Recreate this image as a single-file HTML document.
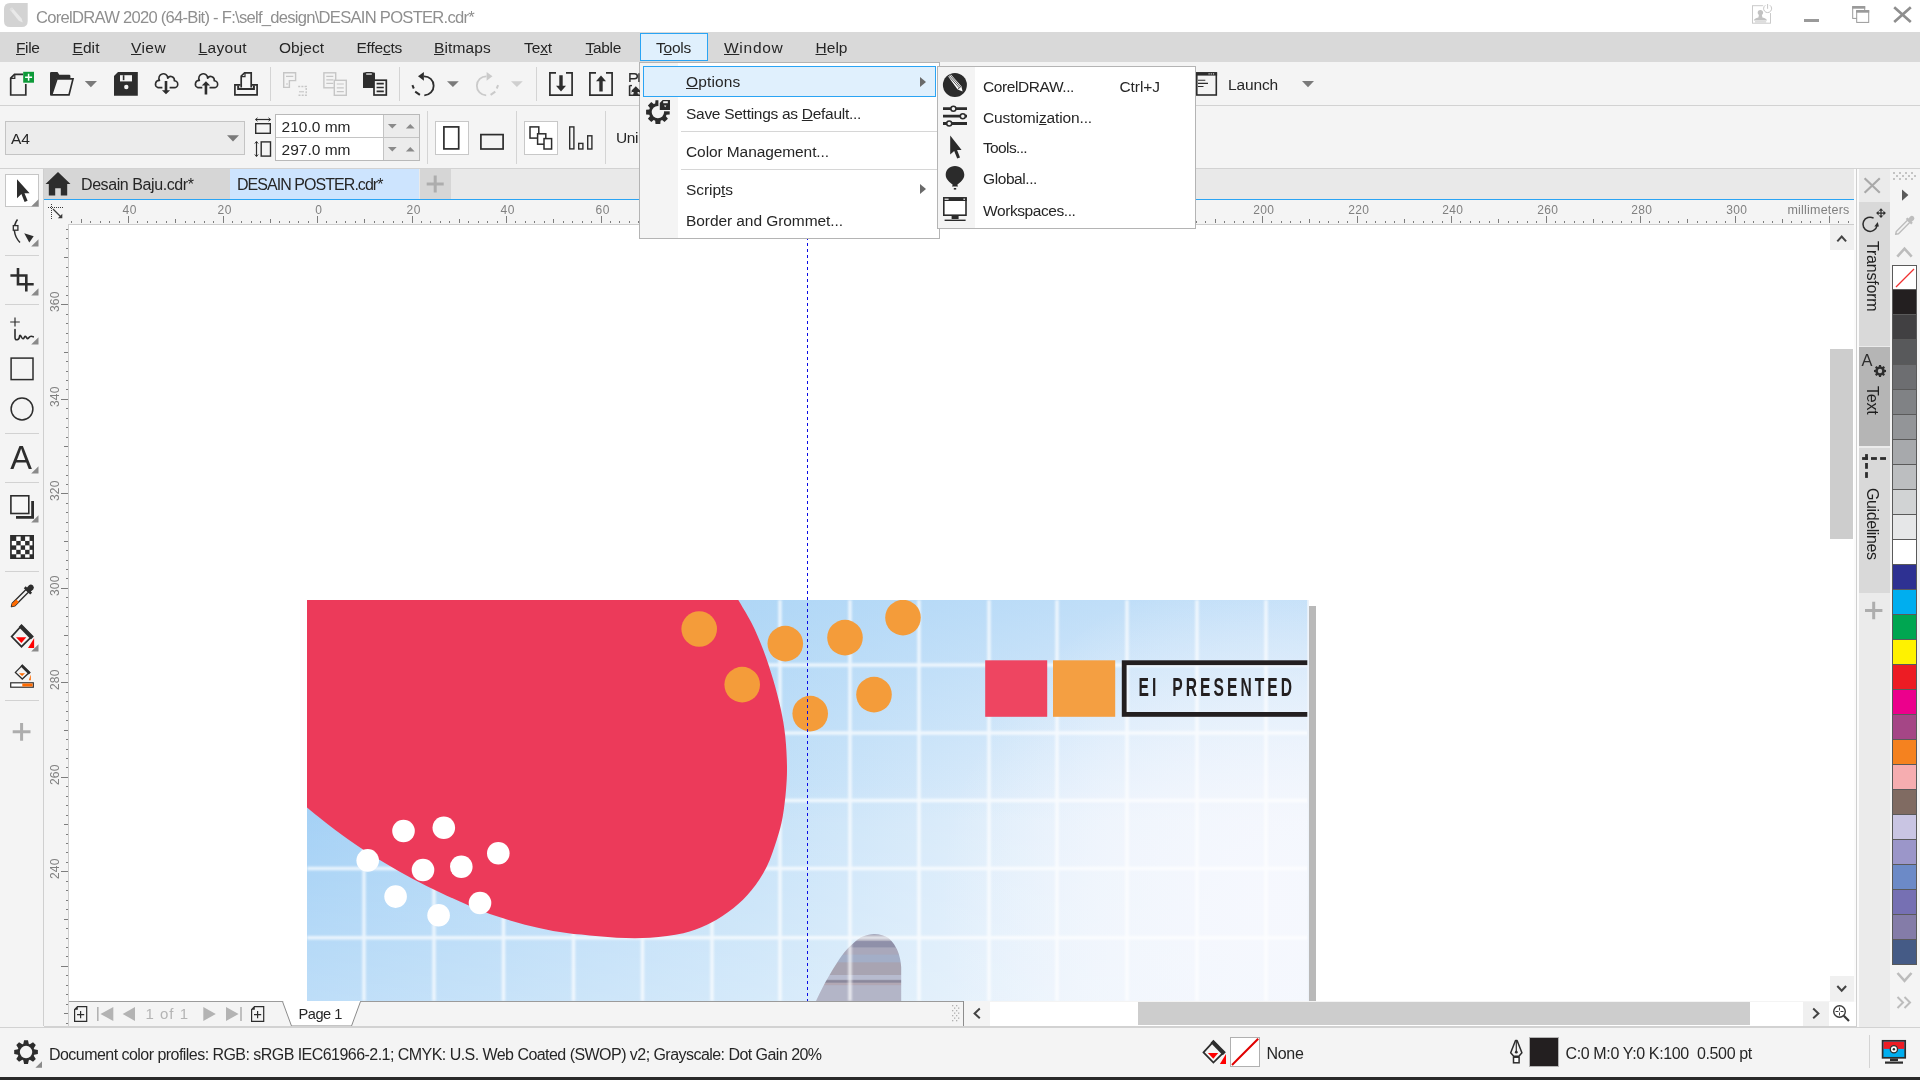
<!DOCTYPE html>
<html lang="en"><head><meta charset="utf-8"><title>CorelDRAW 2020 (64-Bit) - DESAIN POSTER.cdr</title>
<style>
html,body{margin:0;padding:0;background:#fff;}
body{width:1920px;height:1080px;overflow:hidden;font-family:"Liberation Sans",sans-serif;}
#app{position:relative;width:1920px;height:1080px;overflow:hidden;background:#f4f4f4;}
#app div,#app svg,#app span.t{position:absolute;}
.t{white-space:nowrap;line-height:20px;height:20px;}
.t u{text-decoration:underline;text-decoration-thickness:1px;text-underline-offset:0.8px;}
#titlebar{left:0;top:0;width:1920px;height:32px;background:#fff;}
#menubar{left:0;top:32px;width:1920px;height:30px;background:#d9d9d9;}
#toolbar{left:0;top:62px;width:1920px;height:43px;background:#f4f4f4;border-bottom:1px solid #d2d2d2;}
#propbar{left:0;top:106px;width:1920px;height:62px;background:#f4f4f4;border-bottom:1px solid #d2d2d2;}
#tabbar{left:44px;top:169px;width:1810px;height:30px;background:#e9e9e9;border-bottom:1px solid #2aa4f4;}
#toolbox{left:0;top:169px;width:43px;height:857px;background:#f4f4f4;border-right:1px solid #cfcfcf;}
#rulertop{left:44px;top:200px;width:1810px;height:25px;background:#f4f4f4;}
#rulertop-line{left:68px;top:224px;width:1786px;height:1px;background:#cdcdcd;}
#rulerleft{left:44px;top:225px;width:24px;height:801px;background:#f4f4f4;border-right:1px solid #cdcdcd;}
#canvas{left:69px;top:225px;width:1760px;height:776px;background:#fff;overflow:hidden;}
#vscroll{left:1829px;top:225px;width:25px;height:776px;background:#fff;}
#pagenav{left:69px;top:1001px;width:1785px;height:25px;background:#f4f4f4;}
#statusbar{left:0;top:1027px;width:1920px;height:50px;background:#f4f4f4;border-top:1px solid #d2d2d2;}
#taskstrip{left:0;top:1077px;width:1920px;height:3px;background:#2a2a2a;}
#dockers{left:1854px;top:169px;width:36px;height:858px;background:#f4f4f4;}
#palette{left:1890px;top:169px;width:30px;height:858px;background:#f4f4f4;}
.sep-v{width:1px;background:#d2d2d2;}
.sep-h{height:1px;background:#d2d2d2;}
.sw{left:1892px;width:25px;height:25px;box-sizing:border-box;border:1px solid #5a5a5a;border-top:none;}
.menu{background:#fff;border:1px solid #b4b4b4;box-sizing:border-box;}

#labels{left:0;top:0;width:1920px;height:1080px;will-change:transform;}
#art{will-change:transform;}

</style></head>
<body>
<div id="app">
<div id="titlebar"></div>
<div id="menubar"></div>
<div id="toolbar"></div>
<div id="propbar"></div>
<div id="tabbar"></div>
<div id="toolbox"></div>
<div id="rulertop"></div>
<div id="rulertop-line"></div>
<div id="rulerleft"></div>
<div id="canvas"></div>
<div id="vscroll"></div>
<div id="pagenav"></div>
<div id="dockers"></div>
<div id="palette"></div>
<div id="statusbar"></div>
<div id="taskstrip"></div>

<svg id="rt-ticks" style="left:44px;top:200px" width="1809" height="23" viewBox="0 0 1809 23"><path d="M27.50,21v2M37.50,19v4M46.50,21v2M56.50,21v2M65.50,21v2M75.50,21v2M84.50,16v7M93.50,21v2M103.50,21v2M112.50,21v2M122.50,21v2M131.50,19v4M141.50,21v2M150.50,21v2M160.50,21v2M169.50,21v2M179.50,16v7M188.50,21v2M197.50,21v2M207.50,21v2M216.50,21v2M226.50,19v4M235.50,21v2M245.50,21v2M254.50,21v2M264.50,21v2M273.50,16v7M282.50,21v2M292.50,21v2M301.50,21v2M311.50,21v2M320.50,19v4M330.50,21v2M339.50,21v2M349.50,21v2M358.50,21v2M368.50,16v7M377.50,21v2M386.50,21v2M396.50,21v2M405.50,21v2M415.50,19v4M424.50,21v2M434.50,21v2M443.50,21v2M453.50,21v2M462.50,16v7M471.50,21v2M481.50,21v2M490.50,21v2M500.50,21v2M509.50,19v4M519.50,21v2M528.50,21v2M538.50,21v2M547.50,21v2M557.50,16v7M566.50,21v2M575.50,21v2M585.50,21v2M594.50,21v2M604.50,19v4M613.50,21v2M623.50,21v2M632.50,21v2M642.50,21v2M651.50,16v7M660.50,21v2M670.50,21v2M679.50,21v2M689.50,21v2M698.50,19v4M708.50,21v2M717.50,21v2M727.50,21v2M736.50,21v2M746.50,16v7M755.50,21v2M764.50,21v2M774.50,21v2M783.50,21v2M793.50,19v4M802.50,21v2M812.50,21v2M821.50,21v2M831.50,21v2M840.50,16v7M849.50,21v2M859.50,21v2M868.50,21v2M878.50,21v2M887.50,19v4M897.50,21v2M906.50,21v2M916.50,21v2M925.50,21v2M935.50,16v7M944.50,21v2M953.50,21v2M963.50,21v2M972.50,21v2M982.50,19v4M991.50,21v2M1001.50,21v2M1010.50,21v2M1020.50,21v2M1029.50,16v7M1038.50,21v2M1048.50,21v2M1057.50,21v2M1067.50,21v2M1076.50,19v4M1086.50,21v2M1095.50,21v2M1105.50,21v2M1114.50,21v2M1124.50,16v7M1133.50,21v2M1142.50,21v2M1152.50,21v2M1161.50,21v2M1171.50,19v4M1180.50,21v2M1190.50,21v2M1199.50,21v2M1209.50,21v2M1218.50,16v7M1227.50,21v2M1237.50,21v2M1246.50,21v2M1256.50,21v2M1265.50,19v4M1275.50,21v2M1284.50,21v2M1294.50,21v2M1303.50,21v2M1313.50,16v7M1322.50,21v2M1331.50,21v2M1341.50,21v2M1350.50,21v2M1360.50,19v4M1369.50,21v2M1379.50,21v2M1388.50,21v2M1398.50,21v2M1407.50,16v7M1416.50,21v2M1426.50,21v2M1435.50,21v2M1445.50,21v2M1454.50,19v4M1464.50,21v2M1473.50,21v2M1483.50,21v2M1492.50,21v2M1502.50,16v7M1511.50,21v2M1520.50,21v2M1530.50,21v2M1539.50,21v2M1549.50,19v4M1558.50,21v2M1568.50,21v2M1577.50,21v2M1587.50,21v2M1596.50,16v7M1605.50,21v2M1615.50,21v2M1624.50,21v2M1634.50,21v2M1643.50,19v4M1653.50,21v2M1662.50,21v2M1672.50,21v2M1681.50,21v2M1691.50,16v7M1700.50,21v2M1709.50,21v2M1719.50,21v2M1728.50,21v2M1738.50,19v4M1747.50,21v2M1757.50,21v2M1766.50,21v2M1776.50,21v2M1785.50,16v7M1794.50,21v2M1804.50,21v2" stroke="#7d7d7d" stroke-width="1" fill="none" shape-rendering="crispEdges"/></svg>
<svg id="rl-ticks" style="left:44px;top:225px" width="24" height="801" viewBox="0 0 24 801"><path d="M22,4.50h2M22,13.50h2M22,23.50h2M20,32.50h4M22,42.50h2M22,51.50h2M22,61.50h2M22,70.50h2M17,79.50h7M22,89.50h2M22,98.50h2M22,108.50h2M22,117.50h2M20,127.50h4M22,136.50h2M22,146.50h2M22,155.50h2M22,164.50h2M17,174.50h7M22,183.50h2M22,193.50h2M22,202.50h2M22,212.50h2M20,221.50h4M22,231.50h2M22,240.50h2M22,250.50h2M22,259.50h2M17,268.50h7M22,278.50h2M22,287.50h2M22,297.50h2M22,306.50h2M20,316.50h4M22,325.50h2M22,335.50h2M22,344.50h2M22,353.50h2M17,363.50h7M22,372.50h2M22,382.50h2M22,391.50h2M22,401.50h2M20,410.50h4M22,420.50h2M22,429.50h2M22,439.50h2M22,448.50h2M17,457.50h7M22,467.50h2M22,476.50h2M22,486.50h2M22,495.50h2M20,505.50h4M22,514.50h2M22,524.50h2M22,533.50h2M22,542.50h2M17,552.50h7M22,561.50h2M22,571.50h2M22,580.50h2M22,590.50h2M20,599.50h4M22,609.50h2M22,618.50h2M22,627.50h2M22,637.50h2M17,646.50h7M22,656.50h2M22,665.50h2M22,675.50h2M22,684.50h2M20,694.50h4M22,703.50h2M22,713.50h2M22,722.50h2M22,731.50h2M17,741.50h7M22,750.50h2M22,760.50h2M22,769.50h2M22,779.50h2M20,788.50h4M22,798.50h2" stroke="#7d7d7d" stroke-width="1" fill="none" shape-rendering="crispEdges"/></svg>
<svg id="art" style="left:69px;top:225px" width="1760" height="776" viewBox="69 225 1760 776">
<defs>
<linearGradient id="sky" x1="307" y1="1000" x2="1308" y2="600" gradientUnits="userSpaceOnUse">
<stop offset="0" stop-color="#8ec4f1"/><stop offset="0.35" stop-color="#bfdff7"/><stop offset="0.62" stop-color="#e4f0fb"/><stop offset="1" stop-color="#d3e9f9"/></linearGradient>
<linearGradient id="skyR" x1="307" y1="0" x2="1308" y2="0" gradientUnits="userSpaceOnUse">
<stop offset="0" stop-color="#a1cff5"/><stop offset="0.45" stop-color="#c4e1f8"/><stop offset="0.8" stop-color="#e9f2fc"/><stop offset="1" stop-color="#f2f6fd"/></linearGradient>
<linearGradient id="skyT" x1="0" y1="600" x2="0" y2="1000" gradientUnits="userSpaceOnUse">
<stop offset="0" stop-color="#a3d0f5" stop-opacity="0.6"/><stop offset="0.55" stop-color="#a3d0f5" stop-opacity="0"/></linearGradient>
<radialGradient id="glow" cx="1270" cy="900" r="330" gradientUnits="userSpaceOnUse"><stop offset="0" stop-color="#f6f8fe" stop-opacity="0.95"/><stop offset="0.45" stop-color="#f4f7fd" stop-opacity="0.6"/><stop offset="1" stop-color="#f4f7fd" stop-opacity="0"/></radialGradient>
<linearGradient id="skyB" x1="0" y1="600" x2="0" y2="1000" gradientUnits="userSpaceOnUse"><stop offset="0.45" stop-color="#ffffff" stop-opacity="0"/><stop offset="1" stop-color="#ffffff" stop-opacity="0.3"/></linearGradient>
<clipPath id="pc"><rect x="307" y="600" width="1000.3" height="401"/></clipPath>
<filter id="fb" x="-5%" y="-5%" width="110%" height="110%"><feGaussianBlur stdDeviation="0.6"/></filter>
<filter id="gb" x="-5%" y="-5%" width="110%" height="110%"><feGaussianBlur stdDeviation="1.1"/></filter>
</defs>
<rect x="1309" y="606" width="7" height="395" fill="#b9b9b9"/><rect x="1307.3" y="600" width="1.7" height="401" fill="#eef3fa"/>
<g clip-path="url(#pc)">
<rect x="307" y="600" width="1001" height="401" fill="url(#skyR)"/>
<rect x="307" y="600" width="1001" height="401" fill="url(#skyT)"/>
<rect x="307" y="600" width="1001" height="401" fill="url(#skyB)"/>
<rect x="307" y="600" width="1001" height="401" fill="url(#glow)"/>
<clipPath id="fc"><path d="M816,1001 C822,988 829,975 837.2,962.5 C843,953 851,944 860.9,937.3 C866,934.6 871,934 875,934.2 C880,934.3 885,935.6 888.4,938.1 C892,941 894,944 895.5,946.8 C897.5,950 898.6,953 899.4,956.2 C900.5,960 901,964 901.2,967.2 L901.2,1001 Z"/></clipPath>
<g clip-path="url(#fc)" filter="url(#fb)"><rect x="810" y="930" width="95" height="72" fill="#a7a7b8"/><rect x="810" y="930" width="95" height="5" fill="#9090a8"/><rect x="810" y="941" width="95" height="6.6" fill="#8f90a9"/><rect x="810" y="947.6" width="95" height="7" fill="#a9a8bb"/><rect x="810" y="954.6" width="95" height="8" fill="#a3aec7"/><rect x="810" y="962.5" width="95" height="12.5" fill="#a8a4b2"/><rect x="810" y="975" width="95" height="4.6" fill="#b7bbcf"/><rect x="810" y="980.2" width="95" height="2.6" fill="#8b889c"/><rect x="810" y="982.8" width="95" height="2.4" fill="#b2a8b4"/><rect x="810" y="985.2" width="95" height="16" fill="#b3b5c7"/></g>
<path d="M364,600V1001M434,600V1001M503.5,600V1001M573.5,600V1001M642.5,600V1001M712,600V1001M780,600V1001M850,600V1001M919,600V1001M989,600V1001M1057,600V1001M1127,600V1001M1197,600V1001M1266,600V1001M307,665H1308M307,733H1308M307,800.5H1308M307,868.5H1308M307,937.8H1308" stroke="#ffffff" stroke-opacity="0.72" stroke-width="3.4" fill="none" filter="url(#gb)"/>
<path d="M307,600 L738.3,600 C740.5,603.9 747.5,615.0 751.7,623.3 C755.9,631.6 759.7,640.5 763.3,650.0 C766.9,659.5 770.3,670.0 773.3,680.0 C776.2,690.0 779.0,700.5 781.0,710.0 C783.0,719.5 784.3,727.2 785.3,736.7 C786.3,746.2 786.9,757.8 787.0,766.7 C787.1,775.6 786.7,781.7 786.0,790.0 C785.3,798.3 784.2,808.4 782.7,816.7 C781.2,825.0 779.4,831.7 776.7,840.0 C774.0,848.3 770.9,858.4 766.7,866.7 C762.5,875.0 757.3,883.1 751.7,890.0 C746.1,896.9 740.2,902.8 733.3,908.3 C726.3,913.8 718.3,919.1 710.0,923.3 C701.7,927.5 693.3,930.9 683.3,933.3 C673.3,935.7 661.1,937.0 650.0,937.7 C638.9,938.4 628.2,938.2 616.7,937.7 C605.2,937.2 591.9,935.7 581.3,934.6 C570.7,933.5 562.5,932.5 553.1,930.9 C543.7,929.2 534.4,927.1 525.0,924.7 C515.6,922.3 506.3,919.5 496.9,916.3 C487.5,913.1 478.2,909.3 468.8,905.4 C459.4,901.5 450.0,897.2 440.6,892.8 C431.2,888.4 421.9,883.8 412.5,878.8 C403.1,873.8 393.8,868.4 384.4,862.8 C375.0,857.2 365.7,851.4 356.3,845.0 C346.9,838.6 336.3,830.6 328.1,824.4 C319.9,818.1 310.5,810.3 307.0,807.5 Z" fill="#ec3a5a"/>
<circle cx="699.2" cy="629" r="17.8" fill="#f49c3a"/>
<circle cx="785.3" cy="643.6" r="17.8" fill="#f49c3a"/>
<circle cx="845" cy="637.6" r="17.8" fill="#f49c3a"/>
<circle cx="903" cy="617.6" r="17.8" fill="#f49c3a"/>
<circle cx="742.2" cy="684.6" r="17.8" fill="#f49c3a"/>
<circle cx="874" cy="694.6" r="17.8" fill="#f49c3a"/>
<circle cx="810.2" cy="713.6" r="17.8" fill="#f49c3a"/>
<circle cx="403.5" cy="831" r="11.3" fill="#ffffff"/>
<circle cx="443.8" cy="827.7" r="11.3" fill="#ffffff"/>
<circle cx="367.7" cy="860.4" r="11.3" fill="#ffffff"/>
<circle cx="423" cy="870" r="11.3" fill="#ffffff"/>
<circle cx="461.3" cy="866.7" r="11.3" fill="#ffffff"/>
<circle cx="498.3" cy="853.2" r="11.3" fill="#ffffff"/>
<circle cx="395.6" cy="896.6" r="11.3" fill="#ffffff"/>
<circle cx="438.6" cy="915.3" r="11.3" fill="#ffffff"/>
<circle cx="480" cy="903" r="11.3" fill="#ffffff"/>
<rect x="985.2" y="660.3" width="62" height="56.5" fill="#ee4561"/>
<rect x="1053" y="660.3" width="62.2" height="56.5" fill="#f49f42"/>
<rect x="1124.2" y="662.7" width="200" height="51.7" fill="none" stroke="#231f20" stroke-width="4.8"/>
<g transform="translate(1138.6 695.6) scale(0.62 1)"><text x="0" y="0" font-family="'Liberation Sans',sans-serif" font-weight="700" font-size="25.2" fill="#231f20" textLength="247.5" lengthAdjust="spacing" word-spacing="9" id="presented">EI PRESENTED</text></g>
</g>
<path d="M807.5,225V1001" stroke="#0a0ae6" stroke-width="1" stroke-dasharray="3 3" fill="none" shape-rendering="crispEdges"/>
</svg>
<div class="sw" style="top:265px;background:#fff;border-top:1px solid #5a5a5a"><svg style="left:0;top:0" width="23" height="23"><path d="M3,21L21,3" stroke="#f03030" stroke-width="1.2"/></svg></div>
<div class="sw" style="top:290px;background:#231f20"></div>
<div class="sw" style="top:315px;background:#414042"></div>
<div class="sw" style="top:340px;background:#58595b"></div>
<div class="sw" style="top:365px;background:#6d6e71"></div>
<div class="sw" style="top:390px;background:#808285"></div>
<div class="sw" style="top:415px;background:#939598"></div>
<div class="sw" style="top:440px;background:#a7a9ac"></div>
<div class="sw" style="top:465px;background:#bcbec0"></div>
<div class="sw" style="top:490px;background:#d1d3d4"></div>
<div class="sw" style="top:515px;background:#e6e7e8"></div>
<div class="sw" style="top:540px;background:#ffffff"></div>
<div class="sw" style="top:565px;background:#2e3192"></div>
<div class="sw" style="top:590px;background:#00aeef"></div>
<div class="sw" style="top:615px;background:#00a651"></div>
<div class="sw" style="top:640px;background:#fff200"></div>
<div class="sw" style="top:665px;background:#ed1c24"></div>
<div class="sw" style="top:690px;background:#ec008c"></div>
<div class="sw" style="top:715px;background:#a54686"></div>
<div class="sw" style="top:740px;background:#f5821f"></div>
<div class="sw" style="top:765px;background:#f6adb0"></div>
<div class="sw" style="top:790px;background:#806b62"></div>
<div class="sw" style="top:815px;background:#c9c5e3"></div>
<div class="sw" style="top:840px;background:#9b96c9"></div>
<div class="sw" style="top:865px;background:#6c8ac7"></div>
<div class="sw" style="top:890px;background:#7670b3"></div>
<div class="sw" style="top:915px;background:#847ca8"></div>
<div class="sw" style="top:940px;background:#455b86"></div>
<svg id="title-icons" style="left:0;top:0" width="1920" height="32" viewBox="0 0 1920 32">
 <path d="M10,3H27.7V21Q27.7,27 21.7,27H10Q4,27 4,21V9Q4,3 10,3Z" fill="#d3d3d3"/>
 <path d="M9.6,9.2L12,7.6L21.6,18.4L22.8,22.6L18.8,20.8Z" fill="#e9e9e9"/>
 <path d="M9.6,9.2L12,7.6L13.4,9.2L11,10.8Z" fill="#dedede"/>
 <!-- user -->
 <rect x="1752.5" y="5.7" width="18" height="17.5" fill="#fff" stroke="#cacaca" stroke-width="1"/>
 <circle cx="1760.4" cy="12.6" r="2.7" fill="#c2c2c2"/>
 <path d="M1759,14.5H1761.8L1762.4,17.6Q1766.6,18.4 1767,20.6H1753.8Q1754.2,18.4 1758.4,17.6Z" fill="#c2c2c2"/>
 <rect x="1755" y="21.3" width="11.2" height="1.2" fill="#cfcfcf"/>
 <circle cx="1767.6" cy="8.4" r="5.4" fill="#fff"/>
 <path d="M1765.3,5.3A4,4 0 1 0 1769.9,5.3" fill="none" stroke="#c6c6c6" stroke-width="1"/>
 <path d="M1767.6,4V8.8" stroke="#c6c6c6" stroke-width="1"/>
 <!-- minimize -->
 <rect x="1804" y="19" width="15" height="3" fill="#9a9a9a"/>
 <!-- restore -->
 <rect x="1852.7" y="6.6" width="12" height="11.8" fill="#fff" stroke="#9a9a9a" stroke-width="1"/><rect x="1852.2" y="6.1" width="13" height="2.6" fill="#9a9a9a"/>
 <rect x="1856.7" y="10.6" width="12" height="11.8" fill="#fff" stroke="#9a9a9a" stroke-width="1"/><rect x="1856.2" y="10.1" width="13" height="2.6" fill="#9a9a9a"/>
 <!-- close -->
 <path d="M1894.2,7.2L1910.8,21.9M1910.8,7.2L1894.2,21.9" stroke="#8e8e8e" stroke-width="2.7"/>
</svg>

<!-- Tools menu button highlight -->
<div id="tools-btn" style="left:640px;top:33px;width:68px;height:28px;box-sizing:border-box;background:#e0f0fd;border:1px solid #2aa4f4;"></div>
<!-- Tools dropdown -->
<div id="tools-menu" class="menu" style="left:639px;top:62px;width:301px;height:177px;">
  <div style="left:0;top:0;width:38px;height:175px;background:#f4f4f4;"></div>
  <div id="opt-hl" style="left:3px;top:3px;width:293px;height:31px;box-sizing:border-box;background:#e0f0fd;border:1px solid #2aa4f4;"></div>
  <div class="sep-h" style="left:41px;top:68px;width:257px;background:#d6d6d6"></div>
  <div class="sep-h" style="left:41px;top:106px;width:257px;background:#d6d6d6"></div>
  <svg style="left:279px;top:13px" width="8" height="12"><path d="M1,1L7,6L1,11Z" fill="#6a6a6a"/></svg>
  <svg style="left:279px;top:120px" width="8" height="12"><path d="M1,1L7,6L1,11Z" fill="#6a6a6a"/></svg>
  <svg id="ic-savesettings" style="left:1px;top:34px" width="38" height="32" viewBox="641 97 38 32">
    <path d="M666.5,109.4L669.7,109.7L669.7,114.5L666.5,114.8L665.9,116.3L667.9,118.7L664.5,122.1L662.1,120.1L660.6,120.7L660.3,123.9L655.5,123.9L655.2,120.7L653.7,120.1L651.3,122.1L647.9,118.7L649.9,116.3L649.3,114.8L646.1,114.5L646.1,109.7L649.3,109.4L649.9,107.9L647.9,105.5L651.3,102.1L653.7,104.1L655.2,103.5L655.5,100.3L660.3,100.3L660.6,103.5L662.1,104.1L664.5,102.1L667.9,105.5L665.9,107.9Z" fill="#2b2b2b"/>
    <circle cx="657.9" cy="112.1" r="6.2" fill="#f4f4f4"/>
    <path d="M658.4,98.5H671.5V111.3H658.4Z" fill="#f4f4f4"/>
    <path d="M659.8,103L662.6,100H670V109.9H659.8Z" fill="#2b2b2b"/>
    <rect x="663.2" y="101.2" width="4.6" height="2" fill="#f4f4f4"/>
    <path d="M664,105.6H666.4L665.2,107.2Z" fill="#f4f4f4"/>
  </svg>
</div>
<!-- Options submenu -->
<div id="opt-menu" class="menu" style="left:937px;top:66px;width:259px;height:163px;">
  <div style="left:0;top:0;width:37px;height:161px;background:#f4f4f4;"></div>
  <svg id="om-icons" style="left:0;top:0" width="37" height="161" viewBox="938 67 37 161">
   <circle cx="954.9" cy="85" r="12" fill="#2b2b2b"/>
   <path d="M948.2,76.6L950.9,74.4L961.3,86.2L962.6,91.6L957.6,89.4Z" fill="#fff"/>
   <path d="M950.2,75.2L960.4,86.8M949,76.2L959.2,87.8" stroke="#2b2b2b" stroke-width="0.8"/>
   <path d="M957.6,89.4L961.3,86.2" stroke="#2b2b2b" stroke-width="0.8"/>
   <g stroke="#2b2b2b" stroke-width="2.8" fill="none"><path d="M943,108.7H967M943,116.2H967M943,123.5H967"/></g>
   <g stroke="#2b2b2b" stroke-width="1.5" fill="#f4f4f4"><circle cx="953.4" cy="108.7" r="2.5"/><circle cx="962.8" cy="116.2" r="2.5"/><circle cx="949.2" cy="123.5" r="2.5"/></g>
   <path d="M950.2,135.6V154.6L954.2,150.9L957.2,158.6L960,157.4L957.1,150H961.6Z" fill="#2b2b2b"/>
   <path d="M955,166c5.4,0 9.3,3.9 9.3,8.8c0,4.6 -4,7.6 -7,10l0.7,1.7h-6l0.7,-1.7c-3,-2.4 -7,-5.4 -7,-10c0,-4.9 3.9,-8.8 9.3,-8.8z" fill="#2b2b2b"/>
   <rect x="953.8" y="188" width="2.4" height="1.6" fill="#2b2b2b"/>
   <rect x="943.8" y="198" width="22.2" height="17.2" fill="#fff" stroke="#2b2b2b" stroke-width="1.6"/>
   <rect x="943" y="197.2" width="23.8" height="3.8" fill="#2b2b2b"/>
   <rect x="944.6" y="198.6" width="4" height="1.2" fill="#f4f4f4"/><rect x="963.4" y="198.6" width="1.6" height="1.2" fill="#f4f4f4"/>
   <rect x="951.6" y="216" width="7" height="3" fill="#2b2b2b"/>
   <rect x="944.6" y="219.6" width="21" height="1.4" fill="#2b2b2b"/>
  </svg>
</div>

<svg id="tb-icons" style="left:0;top:62px" width="1340" height="44" viewBox="0 62 1340 44">
 <g fill="none" stroke="#2d2d2d" stroke-width="1.7">
  <!-- new -->
  <path d="M23,74.4H14.5L10.7,78.2V95H25.8V84"/>
  <path d="M14.8,74.6V78.4H10.9" stroke-width="1.2"/>
 </g>
 <rect x="23.2" y="71.8" width="10.8" height="10.9" fill="#0d9a38"/>
 <path d="M28.6,73.8V80.8M25.1,77.3H32.1" stroke="#fff" stroke-width="1.5"/>
 <!-- open -->
 <path d="M50,95.7V73.2Q50,72 51.2,72H57.5L59.3,74.7H69.2Q70.4,74.7 70.4,75.9V78.3H56.5L52.2,93.5Z" fill="#2d2d2d"/>
 <path d="M56.9,78.9H73L69,94.9H51.6Z" fill="none" stroke="#2d2d2d" stroke-width="1.7" stroke-linejoin="miter"/>
 <path d="M84.8,81H97L90.9,87.3Z" fill="#7a7a7a"/>
 <!-- save -->
 <path d="M114,95.8V76L118,72H137.8V95.8Z" fill="#2d2d2d"/>
 <rect x="120" y="75.2" width="12" height="6.2" fill="#f4f4f4"/><rect x="122.8" y="75.2" width="1.6" height="5" fill="#2d2d2d"/>
 <circle cx="126.3" cy="87" r="2.2" fill="#f4f4f4"/>
 <!-- cloud down / up -->
 <g fill="none" stroke="#2d2d2d" stroke-width="1.6" stroke-linecap="butt" stroke-linejoin="round">
  <path id="cloudp" d="M162.4,87.6H157.8A3.75,3.75 0 0 1 159.5,80.4A4.4,4.4 0 1 1 167.7,78.3A3.55,3.55 0 0 1 174.3,80.7A3.45,3.45 0 0 1 174.3,87.6H169.6"/>
  <path d="M202.3,87.6H197.7A3.75,3.75 0 0 1 199.4,80.4A4.4,4.4 0 1 1 207.6,78.3A3.55,3.55 0 0 1 214.2,80.7A3.45,3.45 0 0 1 214.2,87.6H209.5"/>
 </g>
 <path d="M164.7,81h2.6v9.2h2.8l-4.1,4.1l-4.1,-4.1h2.8z" fill="#2d2d2d"/>
 <path d="M204.65,94.5h2.6v-9h2.9l-4.2,-4.3l-4.2,4.3h2.9z" fill="#2d2d2d"/>
 <!-- print -->
 <g fill="none" stroke="#2d2d2d" stroke-width="1.7">
  <path d="M241.2,87.5V76L244.6,72.8H251.2V87.5"/>
  <path d="M241.3,76.6H245V73" stroke-width="1.2"/>
  <path d="M240.5,84.9H234.9V94.9H257.1V84.9H252"/>
 </g>
 <path d="M238.2,85.5V89H253.9V85.5" fill="none" stroke="#2d2d2d" stroke-width="2"/>
 <!-- separators -->
 <path d="M270.5,67V101M399.5,67V101M536.5,67V101" stroke="#d4d4d4" stroke-width="1"/>
 <!-- cut (disabled) -->
 <g fill="none" stroke="#c6c6c6" stroke-width="1.4">
  <path d="M283.7,72.8H295.6V80.6H289.4V87.4H283.7Z"/><path d="M286,76.3H293.3M286,84H288" stroke-width="1.2"/>
  <path d="M298.2,86.5H306.2V95.2H298.2" stroke-dasharray="2 1.2"/><path d="M299,91.8H304" stroke-width="1.1"/>
 </g>
 <!-- copy (disabled) -->
 <g fill="#f4f4f4" stroke="#c6c6c6" stroke-width="1.4">
  <rect x="323.9" y="72.8" width="11.8" height="15"/><path d="M326.3,76.3H333.3M326.3,79.8H333.3M326.3,83.3H333.3" stroke-width="1.2"/>
  <rect x="334.3" y="80.3" width="12" height="15"/><path d="M336.8,84H343.8M336.8,87.8H343.8M336.8,91.6H343.8" stroke-width="1.2"/>
 </g>
 <!-- paste -->
 <path d="M363,73.5Q363,72.5 364,72.5H365.5V72H372.5V72.5H374Q375,72.5 375,73.5V88H363Z" fill="#2d2d2d"/>
 <rect x="366.2" y="73.4" width="5.6" height="1.3" fill="#f4f4f4"/>
 <rect x="374" y="80.2" width="12.3" height="14.8" fill="#f4f4f4" stroke="#2d2d2d" stroke-width="1.7"/>
 <path d="M376.6,83.6H383.8M376.6,87.5H383.8M376.6,91.4H383.8" stroke="#2d2d2d" stroke-width="1.6"/>
 <!-- undo -->
 <g fill="none" stroke="#2d2d2d" stroke-width="1.8" stroke-linecap="butt">
  <path d="M424,76.3A9.5,9.5 0 0 1 424.3,95.3"/>
  <path d="M419.9,94.8L415.2,91.6M413.8,88.5L412.4,85.2" stroke-width="2"/>
 </g>
 <path d="M418,76.3L423.9,72V80.8Z" fill="#2d2d2d"/>
 <path d="M447,81.2H458.8L452.9,87.1Z" fill="#7a7a7a"/>
 <!-- redo (disabled) -->
 <g fill="none" stroke="#cacaca" stroke-width="1.8">
  <path d="M486.5,76.3A9.5,9.5 0 0 0 486.2,95.3"/>
  <path d="M490.6,94.8L495.3,91.6M496.7,88.5L498.1,85.2" stroke-width="2"/>
 </g>
 <path d="M492.5,76.3L486.6,72V80.8Z" fill="#cacaca"/>
 <path d="M511,81.2H522.8L516.9,87.1Z" fill="#cfcfcf"/>
 <!-- import / export -->
 <g fill="none" stroke="#2d2d2d" stroke-width="1.7">
  <path d="M556,72.9H549.9V95.1H572.1V72.9H566"/>
  <path d="M596,72.9H589.9V95.1H612.1V72.9H606"/>
 </g>
 <path d="M559.3,75.3h3.4v10.4h3.3l-5,5.7l-5,-5.7h3.3z" fill="#2d2d2d"/>
 <path d="M599.3,91.6h3.4v-10.4h3.3l-5,-5.7l-5,5.7h3.3z" fill="#2d2d2d"/>
 <!-- pdf (partial) -->
 <path d="M629.9,82V73.8H634.5Q637.3,73.8 637.3,76.3Q637.3,78.8 634.5,78.8H629.9" fill="none" stroke="#2d2d2d" stroke-width="1.5"/>
 <path d="M638.9,73.2V82" stroke="#2d2d2d" stroke-width="1.3"/>
 <path d="M629.6,85.6V95.2H640" fill="none" stroke="#2d2d2d" stroke-width="1.6"/><path d="M629.6,85.6H632" stroke="#2d2d2d" stroke-width="1.4"/>
 <path d="M635.8,86.3L640,90.5V93.3H638.5V95H633.2V93.3H631.6V90.5Z" fill="#2d2d2d"/><rect x="631.8" y="92" width="1.8" height="1.6" fill="#f4f4f4"/><rect x="637.6" y="92" width="1.8" height="1.6" fill="#f4f4f4"/>
 <!-- launch -->
 <rect x="1196.8" y="73" width="19.5" height="22" fill="#f4f4f4" stroke="#2d2d2d" stroke-width="1.6"/>
 <rect x="1196" y="72.2" width="21.1" height="3.4" fill="#2d2d2d"/>
 <path d="M1208.5,73.9h1.2M1210.7,73.9h1.2M1212.9,73.9h1.2" stroke="#f4f4f4" stroke-width="1"/>
 <path d="M1198,80.3H1205.3M1198,83.4H1208M1198,86.5H1203.5" stroke="#2d2d2d" stroke-width="1.1"/>
 <path d="M1302,81H1314L1308,87.3Z" fill="#7a7a7a"/>
</svg>

<div id="tool-sel" style="left:5px;top:174px;width:34px;height:33px;box-sizing:border-box;background:#fff;border:1px solid #c6c6c6;"></div>
<svg id="toolbox-icons" style="left:0;top:169px" width="43" height="600" viewBox="0 169 43 600">
 <g fill="#8a8a8a">
  <path d="M38.5,199.2V206.5H31.2Z"/><path d="M38.5,239.2V246.5H31.2Z"/><path d="M38.5,288.2V295.5H31.2Z"/><path d="M38.5,337.2V344.5H31.2Z"/>
  <path d="M38.5,466.2V473.5H31.2Z"/><path d="M38.5,515.2V522.5H31.2Z"/><path d="M38.5,644.2V651.5H31.2Z"/>
 </g>
 <path d="M5,255.5H39M5,304.5H39M5,433.5H39M5,482.5H39M5,571.5H39M5,700.5H39" stroke="#d2d2d2" stroke-width="1"/>
 <!-- pick -->
 <path d="M17,179.2V198.3L21.4,194L24.6,202L27.6,200.7L24.5,193.2H29.6Z" fill="#2d2d2d"/>
 <!-- shape tool -->
 <path d="M17.5,219.5C12.5,226 13.5,236 20,242.5" fill="none" stroke="#2d2d2d" stroke-width="1.5"/>
 <rect x="13.3" y="225.6" width="4.6" height="4.6" fill="#f4f4f4" stroke="#2d2d2d" stroke-width="1.3"/>
 <path d="M24.2,233.2L33.7,236.2L29.3,242.6Z" fill="#2d2d2d"/>
 <!-- crop -->
 <path d="M18,268V284.3H33.7M10.4,275.5H26.3V291.5" fill="none" stroke="#2d2d2d" stroke-width="2.6"/>
 <!-- freehand -->
 <path d="M15,317.5V326.5M10.2,322H19.8" stroke="#2d2d2d" stroke-width="1.2"/>
 <path d="M15,329.5V337.2Q15,340.3 17.3,339.7Q19.5,339 19.5,336.5Q20,333.8 21.7,337.5Q23,340.2 24.3,337.3Q25.3,335.3 26.5,337.5Q27.7,339.7 29,337.5Q30.3,335.5 33.3,336.8" fill="none" stroke="#2d2d2d" stroke-width="1.6" stroke-linecap="round"/>
 <!-- rectangle -->
 <rect x="11.1" y="358.1" width="21.9" height="21.5" fill="none" stroke="#2d2d2d" stroke-width="1.5"/>
 <!-- ellipse -->
 <circle cx="22" cy="409" r="10.9" fill="none" stroke="#2d2d2d" stroke-width="1.5"/>
 <!-- transparency checker -->
 <rect x="10.1" y="535" width="23.9" height="24" fill="#2d2d2d"/>
 <g fill="#fff"><rect x="16.24" y="536.50" width="4.44" height="4.44"/><rect x="25.12" y="536.50" width="4.44" height="4.44"/><rect x="11.80" y="540.94" width="4.44" height="4.44"/><rect x="20.68" y="540.94" width="4.44" height="4.44"/><rect x="29.56" y="540.94" width="2.90" height="4.44"/><rect x="16.24" y="545.38" width="4.44" height="4.44"/><rect x="25.12" y="545.38" width="4.44" height="4.44"/><rect x="11.80" y="549.82" width="4.44" height="4.44"/><rect x="20.68" y="549.82" width="4.44" height="4.44"/><rect x="29.56" y="549.82" width="2.90" height="4.44"/><rect x="16.24" y="554.26" width="4.44" height="3.30"/><rect x="25.12" y="554.26" width="4.44" height="3.30"/></g>
 <!-- shadow tool -->
 <path d="M16,517.4H32.6V501" fill="none" stroke="#2d2d2d" stroke-width="2.8"/>
 <rect x="10.9" y="495.8" width="17.9" height="17.7" fill="#f7f7f7" stroke="#2d2d2d" stroke-width="1.6"/>
 <!-- eyedropper -->
 <path d="M11.5,606.5L12.3,603.2L26,589.5L28.6,592.1L14.9,605.8Z" fill="#f4f4f4" stroke="#2d2d2d" stroke-width="1.4" stroke-linejoin="round"/>
 <path d="M11.6,606.4L12.4,603.3L16.3,599.4L18.8,601.9L14.9,605.8Z" fill="#ff6a00"/>
 <path d="M23.8,588.2L25.7,586.3L27,587.6L29,585.2Q31,583.6 33,585.5Q34.8,587.5 33.2,589.4L30.8,591.4L32.1,592.7L30.2,594.6Z" fill="#2d2d2d"/>
 <!-- fill -->
 <path d="M11.6,636.6L21.5,625.8L31.7,636.6L21.5,646.7Z" fill="#f4f4f4" stroke="#2d2d2d" stroke-width="1.7" stroke-linejoin="miter"/><path d="M21.5,624.0L33.9,636.4L30.9,639.4L18.7,627.0Z" fill="#2d2d2d"/><path d="M16.0,637.3H26.3L21.4,642.9Z" fill="#ff0000"/><path d="M34.1,638.2V648.1H28.0Z" fill="#ff0000"/>
 <!-- smart fill -->
 <path d="M15.4,672.4L22.3,665.4L29.3,672.4L22.3,679Z" fill="#f4f4f4" stroke="#2d2d2d" stroke-width="1.3"/>
 <path d="M22.3,664.2L30.8,672.6L28.8,674.6L20.4,666.2Z" fill="#2d2d2d"/>
 <path d="M19,673.3H25.1L22.1,675.9Z" fill="#ff6a00"/>
 <path d="M30.8,674.6V680.3H28.8Z" fill="#ff6a00"/>
 <rect x="10.7" y="682.8" width="22.6" height="4.4" fill="#fff" stroke="#2d2d2d" stroke-width="1.2"/>
 <rect x="22.3" y="683.5" width="10.3" height="3" fill="#ff6a00"/>
 <!-- plus -->
 <path d="M21.6,723V740.7M12.7,731.8H30.5" stroke="#adadad" stroke-width="3"/>
</svg>

<div id="page-size" style="left:5px;top:121px;width:240px;height:34px;box-sizing:border-box;background:#ececec;border:1px solid #c4c4c4;"></div>
<div id="dims" style="left:275px;top:114px;width:145px;height:47px;box-sizing:border-box;background:#fff;border:1px solid #b9b9b9;">
  <div style="left:107px;top:0;width:35px;height:45px;background:#ececec;border-left:1px solid #c4c4c4;"></div>
  <div style="left:0;top:22px;width:143px;height:1px;background:#c4c4c4;"></div>
</div>
<div id="btn-portrait" style="left:435px;top:121px;width:34px;height:34px;box-sizing:border-box;background:#fff;border:1px solid #c8c8c8;"></div>
<div id="btn-allpages" style="left:524px;top:121px;width:34px;height:34px;box-sizing:border-box;background:#fff;border:1px solid #c8c8c8;"></div>
<svg id="pb-icons" style="left:0;top:106px" width="640" height="62" viewBox="0 106 640 62">
 <path d="M227,135.3H239L233,141.6Z" fill="#7a7a7a"/>
 <g fill="none" stroke="#2d2d2d" stroke-width="1.2">
  <path d="M255.5,119.5H270.5"/><path d="M257.5,117.8L255.6,119.5L257.5,121.2M268.5,117.8L270.4,119.5L268.5,121.2" stroke-width="1"/>
  <rect x="255.7" y="123.7" width="14.6" height="9.6" stroke-width="1.4"/>
  <path d="M256.5,141.5V156.5"/><path d="M254.8,143.5L256.5,141.6L258.2,143.5M254.8,154.5L256.5,156.4L258.2,154.5" stroke-width="1"/>
  <rect x="261.2" y="141.9" width="9.3" height="14.2" stroke-width="1.4"/>
 </g>
 <g fill="#8a8a8a"><path d="M387.9,124H396.7L392.3,128.4Z"/><path d="M405.9,128.4H414.7L410.3,124Z"/><path d="M387.9,147H396.7L392.3,151.4Z"/><path d="M405.9,151.4H414.7L410.3,147Z"/></g>
 <path d="M427.5,111V164M516.5,111V164M605.5,111V164" stroke="#d4d4d4" stroke-width="1"/>
 <g fill="none" stroke="#2d2d2d" stroke-width="1.7">
  <rect x="443.9" y="126.9" width="14.8" height="22"/>
  <rect x="480.9" y="134.6" width="22.2" height="14.4"/>
  <rect x="530" y="126.9" width="8.8" height="11.2" stroke-width="1.5"/><rect x="537.6" y="133.8" width="8.2" height="10.4" fill="#fff" stroke-width="1.5"/><rect x="544" y="138.6" width="7.6" height="10.4" fill="#fff" stroke-width="1.5"/>
  <rect x="569.7" y="126.9" width="4.2" height="22" stroke-width="1.4"/><rect x="578.7" y="143.4" width="4.2" height="5.6" stroke-width="1.4"/><rect x="587.7" y="135.8" width="4.2" height="13.2" stroke-width="1.4"/>
 </g>
</svg>
<!-- tabs -->
<div id="tab1" style="left:44px;top:169px;width:186px;height:30px;background:#d6d6d6;"></div>
<div id="tab2" style="left:230px;top:169px;width:189px;height:30px;background:#cde4fe;"></div>
<div id="tabplus" style="left:420px;top:169px;width:31px;height:30px;background:#d6d6d6;"></div>
<svg id="tab-icons" style="left:44px;top:169px" width="420" height="56" viewBox="44 169 420 56">
 <path d="M58,172L70.5,184H67.2V195.5H60.8V188.2H55.2V195.5H48.8V184H45.5Z" fill="#2d2d2d"/>
 <path d="M435.2,175.5V192.5M426.7,184H443.7" stroke="#adadad" stroke-width="3"/>
 <!-- ruler origin icon -->
 <g stroke="#3a3a3a" stroke-width="1" fill="none" shape-rendering="crispEdges"><path d="M48,207.5H64" stroke-dasharray="1 1"/><path d="M51.5,204V220" stroke-dasharray="1 1"/></g>
 <path d="M53,209L61,217" stroke="#3a3a3a" stroke-width="1.2"/><path d="M62.3,218.3V213.8L57.8,218.3Z" fill="#3a3a3a"/>
</svg>

<!-- vertical scrollbar -->
<div id="vs-up" style="left:1830px;top:225px;width:24px;height:25px;background:#f0f0f0;"></div>
<div id="vs-thumb" style="left:1830px;top:349px;width:23px;height:190px;background:#cdcdcd;"></div>
<div id="vs-down" style="left:1830px;top:976px;width:24px;height:25px;background:#f0f0f0;"></div>
<svg style="left:1830px;top:225px" width="24" height="776" viewBox="1830 225 24 776">
 <path d="M1837.3,241.4L1841.7,236.6L1846.1,241.4" fill="none" stroke="#444" stroke-width="2"/>
 <path d="M1837.3,986L1841.7,990.8L1846.1,986" fill="none" stroke="#444" stroke-width="2"/>
</svg>
<!-- splitter -->
<div style="left:1854px;top:169px;width:5px;height:858px;background:#fbfbfb;"></div>
<div style="left:1856px;top:169px;width:1px;height:858px;background:#cfcfcf;"></div>
<!-- dockers -->
<div id="dock-strip" style="left:1859px;top:169px;width:31px;height:858px;background:#ebebeb;"></div>
<div id="dock-transform" style="left:1859px;top:202px;width:31px;height:144px;background:#d9d9d9;"></div>
<div id="dock-text" style="left:1859px;top:347px;width:31px;height:99px;background:#b5b5b5;"></div>
<div id="dock-guidelines" style="left:1859px;top:448px;width:31px;height:145px;background:#d9d9d9;"></div>
<svg id="dock-icons" style="left:1859px;top:169px" width="31" height="470" viewBox="1859 169 31 470">
 <path d="M1864.6,178.3L1879.8,192.7M1879.8,178.3L1864.6,192.7" stroke="#a9a9a9" stroke-width="2.2"/>
 <!-- transform icon -->
 <path d="M1873.6,218.1A7.1,7.1 0 1 0 1877,225.8" fill="none" stroke="#2d2d2d" stroke-width="1.5"/>
 <path d="M1874.3,226.6H1878.9L1877.7,221.9Z" fill="#2d2d2d"/>
 <path d="M1881,208.2L1883.3,210.7H1881.6V212.5H1883.4V210.8L1885.9,213.1L1883.4,215.4V213.7H1881.6V215.5H1883.3L1881,218L1878.7,215.5H1880.4V213.7H1878.6V215.4L1876.1,213.1L1878.6,210.8V212.5H1880.4V210.7H1878.7Z" fill="#2d2d2d"/>
 <!-- text docker icon -->
 <path d="M1878.79,366.46L1878.97,364.99L1881.03,364.99L1881.21,366.46L1882.36,366.93L1883.52,366.02L1884.98,367.48L1884.07,368.64L1884.54,369.79L1886.01,369.97L1886.01,372.03L1884.54,372.21L1884.07,373.36L1884.98,374.52L1883.52,375.98L1882.36,375.07L1881.21,375.54L1881.03,377.01L1878.97,377.01L1878.79,375.54L1877.64,375.07L1876.48,375.98L1875.02,374.52L1875.93,373.36L1875.46,372.21L1873.99,372.03L1873.99,369.97L1875.46,369.79L1875.93,368.64L1875.02,367.48L1876.48,366.02L1877.64,366.93Z" fill="#2d2d2d"/>
 <circle cx="1880" cy="371" r="2.2" fill="#b5b5b5"/>
 <!-- guidelines icon -->
 <g fill="#2d2d2d"><rect x="1862.1" y="457.1" width="5.8" height="2.8"/><rect x="1865.1" y="454.1" width="2.8" height="5.8"/><rect x="1871" y="457.1" width="5.9" height="2.8"/><rect x="1880.1" y="457.1" width="5.9" height="2.8"/><rect x="1865.1" y="463" width="2.8" height="5.8"/><rect x="1865.1" y="472.1" width="2.8" height="5.8"/></g>
 <path d="M1873.7,601.8V619.2M1865,610.5H1882.4" stroke="#adadad" stroke-width="3"/>
</svg>
<!-- palette top/bottom controls -->
<svg id="pal-ctl" style="left:1890px;top:169px" width="30" height="858" viewBox="1890 169 30 858">
 <g fill="#c4c4c4"><rect x="1893" y="172" width="2" height="2"/><rect x="1899" y="172" width="2" height="2"/><rect x="1905" y="172" width="2" height="2"/><rect x="1911" y="172" width="2" height="2"/><rect x="1896" y="175" width="2" height="2"/><rect x="1902" y="175" width="2" height="2"/><rect x="1908" y="175" width="2" height="2"/><rect x="1914" y="175" width="2" height="2"/><rect x="1893" y="178" width="2" height="2"/><rect x="1899" y="178" width="2" height="2"/><rect x="1905" y="178" width="2" height="2"/><rect x="1911" y="178" width="2" height="2"/></g>
 <path d="M1902,189.4V200.8L1908.4,195.1Z" fill="#5a5a5a"/>
 <!-- eyedropper gray -->
 <path d="M1895.6,234.3L1896.3,231.5L1907.7,220.1L1909.9,222.3L1898.5,233.7Z" fill="none" stroke="#bdbdbd" stroke-width="1.4" stroke-linejoin="round"/>
 <path d="M1905.8,219L1907.4,217.4L1908.5,218.5L1910.2,216.4Q1911.9,215 1913.6,216.6Q1915.2,218.3 1913.8,220L1911.7,221.7L1912.8,222.8L1911.2,224.4Z" fill="#bdbdbd"/>
 <path d="M1897.3,256.6L1904.5,248.6L1911.7,256.6" fill="none" stroke="#bcbcbc" stroke-width="2.6"/>
 <path d="M1897.5,973L1904.5,980.8L1911.5,973" fill="none" stroke="#bcbcbc" stroke-width="2.6"/>
 <path d="M1897.5,997L1903,1002.5L1897.5,1008M1904.5,997L1910,1002.5L1904.5,1008" fill="none" stroke="#bcbcbc" stroke-width="2"/>
</svg>

<!-- page navigator -->
<div style="left:69px;top:1001px;width:895px;height:1px;background:#9b9b9b;"></div>
<svg id="pagenav-icons" style="left:69px;top:1000px" width="900" height="27" viewBox="69 1000 900 27">
 <path d="M282.5,1001.5L291.5,1026H351.5L360.5,1001.5" fill="#fff" stroke="#8a8a8a" stroke-width="1"/>
 <rect x="283.5" y="1001" width="76.5" height="1" fill="#fff"/>
 <g fill="none" stroke="#2d2d2d" stroke-width="1.2">
  <path d="M77.5,1006.6H86.7V1021.4H74.6V1009.5Z"/><path d="M80.6,1011V1018.2M77,1014.6H84.2"/>
  <path d="M254.5,1006.6H263.7V1021.4H251.6V1009.5Z"/><path d="M257.6,1011V1018.2M254,1014.6H261.2"/>
 </g>
 <path d="M77.8,1006.4V1009.7H74.5ZM254.8,1006.4V1009.7H251.5Z" fill="#2d2d2d"/>
 <g fill="#b3b3b3">
  <rect x="97" y="1007" width="1.6" height="14"/><path d="M113.3,1007V1021L100.5,1014Z"/>
  <path d="M135,1007V1021L122.7,1014Z"/>
  <path d="M203.3,1007V1021L215.8,1014Z"/>
  <path d="M226,1007V1021L238.6,1014Z"/><rect x="240.2" y="1007" width="1.6" height="14"/>
 </g>
 <g fill="#b0b0b0"><rect x="952" y="1005" width="1.3" height="1.3"/><rect x="956" y="1005" width="1.3" height="1.3"/><rect x="954" y="1007.5" width="1.3" height="1.3"/><rect x="958" y="1007.5" width="1.3" height="1.3"/><rect x="952" y="1010" width="1.3" height="1.3"/><rect x="956" y="1010" width="1.3" height="1.3"/><rect x="954" y="1012.5" width="1.3" height="1.3"/><rect x="958" y="1012.5" width="1.3" height="1.3"/><rect x="952" y="1015" width="1.3" height="1.3"/><rect x="956" y="1015" width="1.3" height="1.3"/><rect x="954" y="1017.5" width="1.3" height="1.3"/><rect x="958" y="1017.5" width="1.3" height="1.3"/><rect x="952" y="1020" width="1.3" height="1.3"/><rect x="956" y="1020" width="1.3" height="1.3"/></g>
</svg>
<!-- horizontal scrollbar -->
<div style="left:963px;top:1001px;width:1px;height:26px;background:#8d8d8d;"></div>
<div id="hs-track" style="left:990px;top:1002px;width:866px;height:24px;background:#fff;"></div>
<div id="hs-thumb" style="left:1138px;top:1002px;width:612px;height:23px;background:#cdcdcd;"></div>
<div id="hs-right" style="left:1803px;top:1002px;width:26px;height:24px;background:#f0f0f0;"></div>
<svg style="left:964px;top:1001px" width="892" height="26" viewBox="964 1001 892 26">
 <path d="M979.8,1008.6L974.6,1013.4L979.8,1018.2" fill="none" stroke="#444" stroke-width="2"/>
 <path d="M1813.2,1008.6L1818.4,1013.4L1813.2,1018.2" fill="none" stroke="#444" stroke-width="2"/>
 <circle cx="1839.5" cy="1011.5" r="5.8" fill="none" stroke="#3a3a3a" stroke-width="1.4"/>
 <path d="M1843.8,1015.8L1849,1021" stroke="#3a3a3a" stroke-width="2.2"/>
 <path d="M1839.5,1007.5V1015.5M1835.5,1011.5H1843.5" stroke="#3a3a3a" stroke-width="1" stroke-dasharray="3 2"/>
</svg>
<div style="left:44px;top:1026px;width:1812px;height:1px;background:#d2d2d2;"></div>
<!-- status bar -->
<svg id="status-icons" style="left:0;top:1028px" width="1920" height="49" viewBox="0 1028 1920 49">
 <!-- gear -->
 <path d="M23.25,1043.90L24.09,1040.20L27.99,1040.20L28.83,1043.90L29.82,1044.32L33.04,1042.29L35.79,1045.04L33.76,1048.26L34.18,1049.25L37.88,1050.09L37.88,1053.99L34.18,1054.83L33.76,1055.82L35.79,1059.04L33.04,1061.79L29.82,1059.76L28.83,1060.18L27.99,1063.88L24.09,1063.88L23.25,1060.18L22.26,1059.76L19.04,1061.79L16.29,1059.04L18.32,1055.82L17.90,1054.83L14.20,1053.99L14.20,1050.09L17.90,1049.25L18.32,1048.26L16.29,1045.04L19.04,1042.29L22.26,1044.32Z" fill="#2d2d2d"/>
 <circle cx="26.04" cy="1052.04" r="6.2" fill="#f4f4f4"/>
 <path d="M42,1061.2V1067.8H35.4Z" fill="#8a8a8a"/>
 <!-- fill bucket -->
 <path d="M1203.5,1052.4L1213.4,1041.6L1223.6,1052.4L1213.4,1062.5Z" fill="#f4f4f4" stroke="#2d2d2d" stroke-width="1.7" stroke-linejoin="miter"/><path d="M1213.4,1039.8L1225.8,1052.2L1222.8,1055.2L1210.6,1042.8Z" fill="#2d2d2d"/><path d="M1207.9,1053.1H1218.2L1213.3,1058.7Z" fill="#ff0000"/><path d="M1226.0,1054.0V1063.9H1219.9Z" fill="#ff0000"/>
 <rect x="1230.5" y="1037.5" width="29" height="29" fill="#fff" stroke="#b0b0b0" stroke-width="1"/>
 <path d="M1232,1065L1258.2,1038.8" stroke="#e00000" stroke-width="2"/>
 <!-- pen nib -->
 <path d="M1515.5,1040.6H1517.1L1521.9,1052.8L1518.9,1056.3H1513.7L1510.7,1052.8Z" fill="#f4f4f4" stroke="#2d2d2d" stroke-width="1.5" stroke-linejoin="round"/>
 <path d="M1516.3,1041V1051.5" stroke="#2d2d2d" stroke-width="1.2"/><circle cx="1516.3" cy="1052.2" r="1.4" fill="#2d2d2d"/>
 <rect x="1513.5" y="1057.2" width="5.6" height="5.6" fill="#fff" stroke="#2d2d2d" stroke-width="1.5"/>
 <rect x="1529.5" y="1037.5" width="29" height="29" fill="#231f20" stroke="#b4b4b4" stroke-width="1"/>
 <path d="M1869.5,1035V1068" stroke="#d4d4d4" stroke-width="1"/>
 <!-- monitor -->
 <rect x="1882.6" y="1040.8" width="22.6" height="17" fill="#00aeef" stroke="#2d2d2d" stroke-width="1.7"/>
 <rect x="1883.5" y="1041.7" width="20.8" height="7.2" fill="#ee1c24"/>
 <circle cx="1893.9" cy="1049.2" r="3.6" fill="#fff" stroke="#2d2d2d" stroke-width="1.3"/><circle cx="1893.9" cy="1049.2" r="1.2" fill="#2d2d2d"/>
 <rect x="1890" y="1058.5" width="8" height="2.5" fill="#2d2d2d"/><rect x="1885" y="1061.5" width="18" height="2.2" fill="#2d2d2d"/>
</svg>


<div id="labels">
<span class="t" id="title" style="left:36px;top:7.65px;font-size:16.6px;color:#8f8f8f;letter-spacing:-0.740px;">CorelDRAW 2020 (64-Bit) - F:\self_design\DESAIN POSTER.cdr*</span>
<span class="t" id="m_file" style="left:16px;top:38.03px;font-size:15.5px;color:#262626;letter-spacing:-0.371px;"><u>F</u>ile</span>
<span class="t" id="m_edit" style="left:72.5px;top:38.03px;font-size:15.5px;color:#262626;letter-spacing:0.070px;"><u>E</u>dit</span>
<span class="t" id="m_view" style="left:131px;top:38.03px;font-size:15.5px;color:#262626;letter-spacing:0.418px;"><u>V</u>iew</span>
<span class="t" id="m_layout" style="left:198.5px;top:38.03px;font-size:15.5px;color:#262626;letter-spacing:0.326px;"><u>L</u>ayout</span>
<span class="t" id="m_object" style="left:279px;top:38.03px;font-size:15.5px;color:#262626;letter-spacing:0.029px;">Ob<u>j</u>ect</span>
<span class="t" id="m_effects" style="left:356.5px;top:38.03px;font-size:15.5px;color:#262626;letter-spacing:-0.230px;">Effe<u>c</u>ts</span>
<span class="t" id="m_bitmaps" style="left:434px;top:38.03px;font-size:15.5px;color:#262626;letter-spacing:0.143px;"><u>B</u>itmaps</span>
<span class="t" id="m_text" style="left:524px;top:38.03px;font-size:15.5px;color:#262626;letter-spacing:-0.109px;">Te<u>x</u>t</span>
<span class="t" id="m_table" style="left:585.5px;top:38.03px;font-size:15.5px;color:#262626;letter-spacing:-0.312px;"><u>T</u>able</span>
<span class="t" id="m_tools" style="left:656px;top:38.03px;font-size:15.5px;color:#262626;letter-spacing:-0.241px;">T<u>o</u>ols</span>
<span class="t" id="m_window" style="left:724px;top:38.03px;font-size:15.5px;color:#262626;letter-spacing:0.727px;"><u>W</u>indow</span>
<span class="t" id="m_help" style="left:815.5px;top:38.03px;font-size:15.5px;color:#262626;letter-spacing:0.027px;"><u>H</u>elp</span>
<span class="t" id="tm_options" style="left:686px;top:72.13px;font-size:15.5px;color:#262626;letter-spacing:0.152px;"><u>O</u>ptions</span>
<span class="t" id="tm_save" style="left:686px;top:103.83px;font-size:15.5px;color:#262626;letter-spacing:-0.284px;">Save Settings as <u>D</u>efault...</span>
<span class="t" id="tm_color" style="left:686px;top:141.63px;font-size:15.5px;color:#262626;letter-spacing:-0.092px;">Color Management...</span>
<span class="t" id="tm_scripts" style="left:686px;top:179.63px;font-size:15.5px;color:#262626;letter-spacing:-0.056px;">Scrip<u>t</u>s</span>
<span class="t" id="tm_border" style="left:686px;top:210.63px;font-size:15.5px;color:#262626;letter-spacing:-0.072px;">Border and Grommet...</span>
<span class="t" id="om_corel" style="left:983px;top:76.63px;font-size:15.5px;color:#262626;letter-spacing:-0.408px;">CorelDRAW...</span>
<span class="t" id="om_ctrlj" style="left:1119.5px;top:76.63px;font-size:15.5px;color:#262626;letter-spacing:-0.070px;">Ctrl+J</span>
<span class="t" id="om_custom" style="left:983px;top:107.63px;font-size:15.5px;color:#262626;letter-spacing:-0.134px;">Customi<u>z</u>ation...</span>
<span class="t" id="om_tools" style="left:983px;top:138.43px;font-size:15.5px;color:#262626;letter-spacing:-0.639px;">Tools...</span>
<span class="t" id="om_global" style="left:983px;top:169.43px;font-size:15.5px;color:#262626;letter-spacing:-0.415px;">Global...</span>
<span class="t" id="om_work" style="left:983px;top:200.63px;font-size:15.5px;color:#262626;letter-spacing:-0.417px;">Workspaces...</span>
<span class="t" id="tb_launch" style="left:1228px;top:74.63px;font-size:15.5px;color:#262626;letter-spacing:-0.143px;">Launch</span>
<span class="t" id="pb_uni" style="left:616px;top:128.13px;font-size:15.5px;color:#262626;letter-spacing:-0.422px;width:24px;overflow:hidden;">Uni</span>
<span class="t" id="tool_text" style="left:10.2px;top:448.34px;font-size:32.5px;color:#2d2d2d;letter-spacing:0.912px;">A</span>
<span class="t" id="pb_a4" style="left:11px;top:128.63px;font-size:15.5px;color:#262626;letter-spacing:0.016px;">A4</span>
<span class="t" id="pb_w" style="left:281.5px;top:117.23px;font-size:15.5px;color:#262626;letter-spacing:0.010px;">210.0 mm</span>
<span class="t" id="pb_h" style="left:281.5px;top:140.13px;font-size:15.5px;color:#262626;letter-spacing:0.010px;">297.0 mm</span>
<span class="t" id="tab1" style="left:81px;top:174.66px;font-size:16px;color:#262626;letter-spacing:-0.417px;">Desain Baju.cdr*</span>
<span class="t" id="tab2" style="left:237px;top:174.66px;font-size:16px;color:#262626;letter-spacing:-0.956px;">DESAIN POSTER.cdr*</span>
<span class="t" id="dk_transform" style="left:1872.2px;top:-15.54px;font-size:16px;color:#1e1e1e;letter-spacing:-0.201px;top:241px;left:1872.2px;transform-origin:0 0;transform:rotate(90deg) translate(0,-10px);">Transform</span>
<span class="t" id="dk_text" style="left:1872.2px;top:-15.54px;font-size:16px;color:#1e1e1e;letter-spacing:-0.211px;top:385.5px;left:1872.2px;transform-origin:0 0;transform:rotate(90deg) translate(0,-10px);">Text</span>
<span class="t" id="dk_guidelines" style="left:1872.2px;top:-15.54px;font-size:16px;color:#1e1e1e;letter-spacing:-0.411px;top:487.5px;left:1872.2px;transform-origin:0 0;transform:rotate(90deg) translate(0,-10px);">Guidelines</span>
<span class="t" id="dk_A" style="left:1861.6px;top:349.52px;font-size:16.4px;color:#2d2d2d;letter-spacing:0.062px;">A</span>
<span class="t" id="pn_1of1" style="left:145.5px;top:1004.40px;font-size:15px;color:#b4b4b4;letter-spacing:0.996px;">1  of  1</span>
<span class="t" id="pn_page1" style="left:298.5px;top:1004.14px;font-size:14.6px;color:#262626;letter-spacing:-0.461px;">Page 1</span>
<span class="t" id="st_profiles" style="left:49px;top:1044.66px;font-size:16px;color:#262626;letter-spacing:-0.541px;">Document color profiles: RGB: sRGB IEC61966-2.1; CMYK: U.S. Web Coated (SWOP) v2; Grayscale: Dot Gain 20%</span>
<span class="t" id="st_none" style="left:1266.5px;top:1044.16px;font-size:16px;color:#262626;letter-spacing:-0.312px;">None</span>
<span class="t" id="st_outline" style="left:1565.5px;top:1044.16px;font-size:16px;color:#262626;letter-spacing:-0.368px;">C:0 M:0 Y:0 K:100&nbsp; 0.500 pt</span>
<span class="t" id="rt0" style="left:122.54999999999998px;top:200.14px;font-size:12px;color:#808080;letter-spacing:0.470px;">40</span>
<span class="t" id="rt1" style="left:217.54999999999998px;top:200.14px;font-size:12px;color:#808080;letter-spacing:0.470px;">20</span>
<span class="t" id="rt2" style="left:315.2px;top:200.14px;font-size:12px;color:#808080;letter-spacing:0.312px;">0</span>
<span class="t" id="rt3" style="left:406.55px;top:200.14px;font-size:12px;color:#808080;letter-spacing:0.470px;">20</span>
<span class="t" id="rt4" style="left:500.55px;top:200.14px;font-size:12px;color:#808080;letter-spacing:0.470px;">40</span>
<span class="t" id="rt5" style="left:595.5500000000001px;top:200.14px;font-size:12px;color:#808080;letter-spacing:0.470px;">60</span>
<span class="t" id="rt6" style="left:1253.2px;top:200.14px;font-size:12px;color:#808080;letter-spacing:0.323px;">200</span>
<span class="t" id="rt7" style="left:1348.2px;top:200.14px;font-size:12px;color:#808080;letter-spacing:0.323px;">220</span>
<span class="t" id="rt8" style="left:1442.2px;top:200.14px;font-size:12px;color:#808080;letter-spacing:0.323px;">240</span>
<span class="t" id="rt9" style="left:1537.2px;top:200.14px;font-size:12px;color:#808080;letter-spacing:0.323px;">260</span>
<span class="t" id="rt10" style="left:1631.2px;top:200.14px;font-size:12px;color:#808080;letter-spacing:0.323px;">280</span>
<span class="t" id="rt11" style="left:1726.2px;top:200.14px;font-size:12px;color:#808080;letter-spacing:0.323px;">300</span>
<span class="t" id="rt_mm" style="left:1787.5px;top:199.97px;font-size:12.5px;color:#808080;letter-spacing:0.206px;">millimeters</span>
<span class="t" id="rl0" style="left:0px;top:-14.16px;font-size:12px;color:#808080;letter-spacing:0.190px;left:47.8px;top:312.1px;transform-origin:0 0;transform:rotate(-90deg);line-height:14px;height:14px;">360</span>
<span class="t" id="rl1" style="left:0px;top:-14.16px;font-size:12px;color:#808080;letter-spacing:0.190px;left:47.8px;top:406.6px;transform-origin:0 0;transform:rotate(-90deg);line-height:14px;height:14px;">340</span>
<span class="t" id="rl2" style="left:0px;top:-14.16px;font-size:12px;color:#808080;letter-spacing:0.190px;left:47.8px;top:501.1px;transform-origin:0 0;transform:rotate(-90deg);line-height:14px;height:14px;">320</span>
<span class="t" id="rl3" style="left:0px;top:-14.16px;font-size:12px;color:#808080;letter-spacing:0.190px;left:47.8px;top:595.5999999999999px;transform-origin:0 0;transform:rotate(-90deg);line-height:14px;height:14px;">300</span>
<span class="t" id="rl4" style="left:0px;top:-14.16px;font-size:12px;color:#808080;letter-spacing:0.190px;left:47.8px;top:690.0999999999999px;transform-origin:0 0;transform:rotate(-90deg);line-height:14px;height:14px;">280</span>
<span class="t" id="rl5" style="left:0px;top:-14.16px;font-size:12px;color:#808080;letter-spacing:0.190px;left:47.8px;top:784.5999999999999px;transform-origin:0 0;transform:rotate(-90deg);line-height:14px;height:14px;">260</span>
<span class="t" id="rl6" style="left:0px;top:-14.16px;font-size:12px;color:#808080;letter-spacing:0.190px;left:47.8px;top:879.0999999999999px;transform-origin:0 0;transform:rotate(-90deg);line-height:14px;height:14px;">240</span>
</div>
</div>
</body></html>
